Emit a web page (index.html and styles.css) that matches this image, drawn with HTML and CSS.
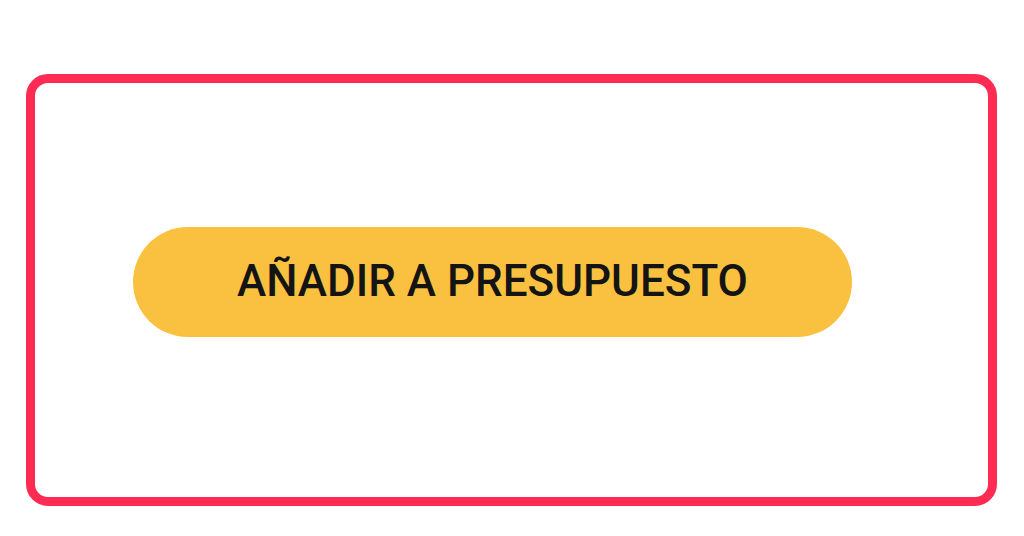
FILE: index.html
```html
<!DOCTYPE html>
<html lang="es">
<head>
<meta charset="utf-8">
<link rel="stylesheet" href="styles.css">
</head>
<body>
<div class="frame">
  <button class="btn">AÑADIR A PRESUPUESTO</button>
</div>
</body>
</html>
```
FILE: styles.css
```css
html, body {
  margin: 0;
  padding: 0;
  background: #ffffff;
}
body {
  padding: 74px 27px 30px 26px;
  box-sizing: border-box;
  width: 1024px;
  height: 536px;
}
.frame {
  box-sizing: border-box;
  height: 432px;
  border: 9px solid #ff2b52;
  border-radius: 22px;
  padding: 144px 0 0 98px;
}
.btn {
  display: flex;
  align-items: center;
  justify-content: center;
  width: 719px;
  height: 110px;
  border: none;
  border-radius: 55px;
  background: #f9c13f;
  color: #141414;
  font-family: Roboto, "Liberation Sans", sans-serif;
  font-weight: 500;
  font-size: 44px;
  letter-spacing: 0;
  padding: 0 0 2px 0;
  margin: 0;
}
```
